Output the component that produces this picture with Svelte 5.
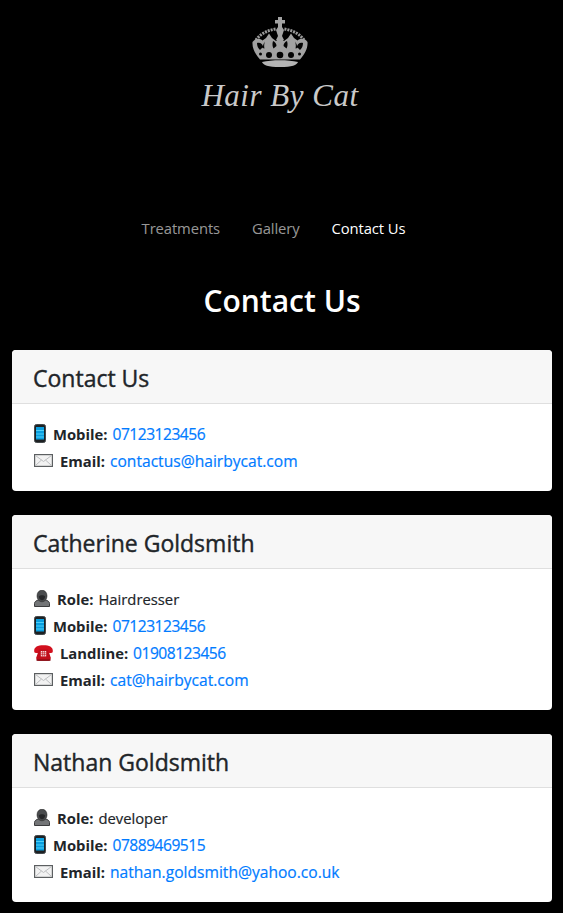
<script>
	const navLinks = [
		{ label: 'Treatments', active: false },
		{ label: 'Gallery', active: false },
		{ label: 'Contact Us', active: true }
	];

	const cards = [
		{
			title: 'Contact Us',
			rows: [
				{ icon: 'mobile', label: 'Mobile:', value: '07123123456', href: 'tel:07123123456' },
				{ icon: 'mail', label: 'Email:', value: 'contactus@hairbycat.com', href: 'mailto:contactus@hairbycat.com' }
			]
		},
		{
			title: 'Catherine Goldsmith',
			rows: [
				{ icon: 'person', label: 'Role:', value: 'Hairdresser' },
				{ icon: 'mobile', label: 'Mobile:', value: '07123123456', href: 'tel:07123123456' },
				{ icon: 'phone', label: 'Landline:', value: '01908123456', href: 'tel:01908123456' },
				{ icon: 'mail', label: 'Email:', value: 'cat@hairbycat.com', href: 'mailto:cat@hairbycat.com' }
			]
		},
		{
			title: 'Nathan Goldsmith',
			rows: [
				{ icon: 'person', label: 'Role:', value: 'developer' },
				{ icon: 'mobile', label: 'Mobile:', value: '07889469515', href: 'tel:07889469515' },
				{ icon: 'mail', label: 'Email:', value: 'nathan.goldsmith@yahoo.co.uk', href: 'mailto:nathan.goldsmith@yahoo.co.uk' }
			]
		}
	];
</script>

{#snippet icon(name)}
	{#if name === 'mobile'}
		<svg class="icon" width="12" height="19" viewBox="0 0 12 19">
			<rect x="0.5" y="0.5" width="11" height="18" rx="2" fill="#1d2022" stroke="#44494c" />
			<rect x="2" y="3" width="8" height="12.500" fill="#0a9fe0" />
			<path d="M2 6.500h8M2 10h8M2 13h8" stroke="#4fd0f8" stroke-width="1" />
		</svg>
	{:else if name === 'mail'}
		<svg class="icon" width="19" height="13" viewBox="0 0 19 13">
			<rect x="0.6" y="0.6" width="17.800" height="11.800" fill="#f2f2f2" stroke="#5c5f61" stroke-width="1.200" />
			<path d="M1.500 1.500l8 6 8-6M1.500 11.500l6-5.500M17.500 11.500l-6-5.500" fill="none" stroke="#bcbec0" />
		</svg>
	{:else if name === 'person'}
		<svg class="icon" width="16" height="17" viewBox="0 0 16 17">
			<path d="M0.500 16.500v-3c0-2 2-3 4-3.500h7c2 .5 4 1.500 4 3.500v3z" fill="#737577" stroke="#3a3b3d" />
			<path d="M3 6c0-3.700 2.200-5.700 5-5.700S13 2.300 13 6c0 3.200-2.200 5.800-5 5.800S3 9.200 3 6z" fill="#4a4c4e" stroke="#333" stroke-width="0.600" />
			<path d="M4.800 6.500c1.200-1.600 5.200-1.600 6.400 0-.2 2-1.500 3.700-3.200 3.700S5 8.500 4.800 6.500z" fill="#262729" />
		</svg>
	{:else if name === 'phone'}
		<svg class="icon" width="19" height="16" viewBox="0 0 19 16">
			<path d="M0.300 7C-.5 2.500 3 .3 9.500.3s10 2.200 9.200 6.700c-.2 1.200-4.400 1.300-4.900.2V5H5.200v2.200C4.700 8.300.5 8.200.3 7z" fill="#d2101e" />
			<path d="M5 4.500h9l2.700 8c.3 1.700-.5 3.200-2.200 3.200h-10c-1.700 0-2.500-1.500-2.200-3.200z" fill="#c00d1a" />
			<path d="M2.500 14.500h14v1.200h-14z" fill="#7d0a12" />
			<rect x="6.800" y="6" width="5.400" height="5.400" fill="#f6dfe1" />
			<path d="M8.600 6v5.400M10.400 6v5.400M6.800 7.800h5.400M6.800 9.600h5.400" stroke="#c00d1a" stroke-width="0.600" />
		</svg>
	{/if}
{/snippet}

<header class="site-header">
	<div class="logo">
		<svg class="crown" width="66" height="58" viewBox="0 0 66 58">
			<!-- cross and stem -->
			<path d="M31 5h4v3h3v3.500h-3V15l2 3-2 6 2 4h-8l2-4-2-6 2-3v-3.500h-3V8h3z" fill="#a4a4a4" />
			<!-- beaded arches -->
			<path d="M9 28C13 22 21 18 29 17M57 28C53 22 45 18 37 17" fill="none" stroke="#9a9a9a" stroke-width="3" stroke-dasharray="2 1" />
			<!-- body -->
			<path d="M5.500 30C8 26 13 26 15.500 28.500L19 26l3-4.500 3 4.500 4 3 4-3.500 4 3.500 4-3 3-4.500 3 4.500 3.500 2.500C53 26 58 26 60.500 30 61 36 58 42 53 47.500H13C8 42 5 36 5.500 30z" fill="#a2a2a2" />
			<!-- gaps around the fleurs -->
			<path d="M10 31c3-1 6 1 6 4l-3 3c-2-2-3-4-3-7zM56 31c-3-1-6 1-6 4l3 3c2-2 3-4 3-7zM26 29c2 1 3.500 2.500 3.500 5l-3 2.500c-1-2-1.500-4.500-.5-7.500zM40 29c-2 1-3.500 2.500-3.500 5l3 2.500c1-2 1.500-4.500.5-7.500zM18 29.500c-1 2.500-1 5-.5 7l-2-.5 1-4zM48 29.500c1 2.500 1 5 .5 7l2-.5-1-4z" fill="#050505" />
			<circle cx="22" cy="43" r="3" fill="#050505" />
			<circle cx="33" cy="43" r="3.300" fill="#050505" />
			<circle cx="44" cy="43" r="3" fill="#050505" />
			<circle cx="13.500" cy="42" r="1.500" fill="#050505" />
			<circle cx="52.500" cy="42" r="1.500" fill="#050505" />
			<!-- base -->
			<path d="M15 50c10-2.500 26-2.500 36 0-1 3-6 5-18 5s-17-2-18-5z" fill="#b4b4b4" />
		</svg>
		<div class="logo-text">Hair By Cat</div>
	</div>
	<nav class="site-nav">
		{#each navLinks as link}
			<a href="#top" class="nav-link" class:active={link.active}>{link.label}</a>
		{/each}
	</nav>
</header>

<main class="content">
	<h1>Contact Us</h1>
	{#each cards as card}
		<section class="card">
			<h4 class="card-header">{card.title}</h4>
			<div class="card-body">
				{#each card.rows as row}
					<div class="row">
						{@render icon(row.icon)}
						<strong>{row.label}</strong>
						{#if row.href}
							<a href={row.href} class:tel={row.href.startsWith('tel:')}>{row.value}</a>
						{:else}
							<span>{row.value}</span>
						{/if}
					</div>
				{/each}
			</div>
		</section>
	{/each}
</main>

<style>
	:global(body) {
		background: #000;
		font-family: 'Open Sans', 'Noto Sans', sans-serif;
		font-size: 15px;
		color: #212529;
	}

	.site-header {
		display: flex;
		flex-direction: column;
		align-items: center;
		padding-top: 12px;
	}

	.logo {
		display: flex;
		flex-direction: column;
		align-items: center;
		height: 196px;
		margin-left: -3px;
	}

	.crown {
		display: block;
		filter: blur(0.3px);
	}

	.logo-text {
		margin-top: 7px;
		font-family: 'Liberation Serif', serif;
		font-style: italic;
		font-size: 31px;
		line-height: 38px;
		letter-spacing: 0.5px;
		color: #c9c9c9;
	}

	.site-nav {
		display: flex;
		justify-content: center;
		padding-right: 16px;
	}

	.nav-link {
		padding: 8px 16px;
		font-size: 14.8px;
		line-height: 24px;
		letter-spacing: -0.1px;
		color: rgba(255, 255, 255, 0.6);
		text-decoration: none;
	}

	.nav-link.active {
		color: #fff;
	}

	.content {
		padding: 0 11px 11px 12px;
	}

	h1 {
		margin: 34px 0 30px;
		font-size: 30px;
		line-height: 38px;
		font-weight: 600;
		text-align: center;
		color: #fff;
	}

	.card {
		margin-bottom: 24px;
		border-radius: 4px;
		background: #fff;
		overflow: hidden;
	}

	.card:last-child {
		margin-bottom: 0;
	}

	.card-header {
		margin: 0;
		padding: 14px 20px 10px 21px;
		font-size: 23px;
		line-height: 29px;
		font-weight: 400;
		-webkit-text-stroke: 0.4px;
		background: #f7f7f7;
		border-bottom: 1px solid #dfdfdf;
	}

	.card-body {
		padding: 16px 20px 17px;
	}

	.row {
		display: flex;
		align-items: center;
		gap: 5px;
		height: 27px;
	}

	.row strong {
		font-size: 14.8px;
		font-weight: 700;
	}

	.row span {
		font-size: 14.8px;
		-webkit-text-stroke: 0.2px;
	}

	.row .icon {
		margin-left: 2px;
		margin-right: 2px;
		flex: none;
	}

	.row a {
		font-size: 15.6px;
		-webkit-text-stroke: 0.2px;
		color: #007bff;
		text-decoration: none;
	}

	.row a.tel {
		letter-spacing: -0.5px;
	}
</style>
